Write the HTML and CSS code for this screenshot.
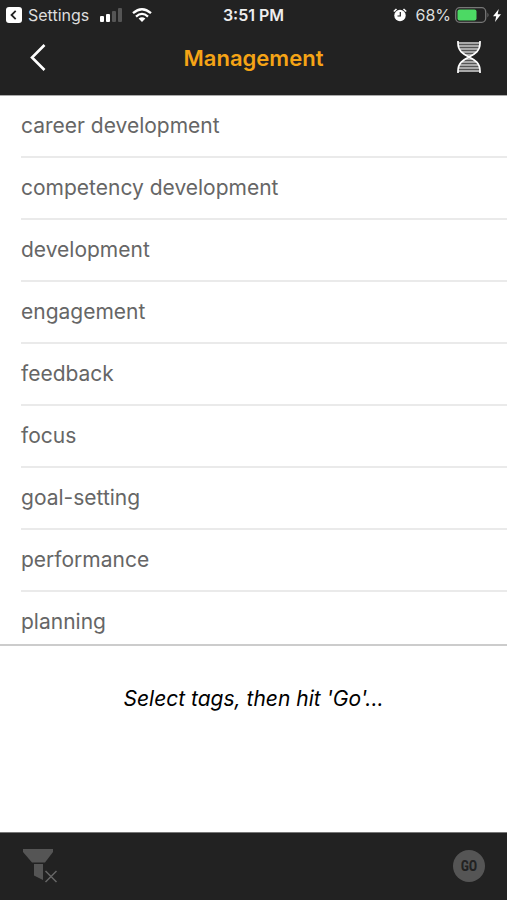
FILE: index.html
```html
<!DOCTYPE html>
<html lang="en">
<head>
<meta charset="utf-8">
<meta name="viewport" content="width=device-width, initial-scale=1">
<title>Management</title>
<link rel="stylesheet" href="styles.css">
</head>
<body>
<header class="top">
  <div class="status">
    <div class="status-left">
      <a class="return" href="#settings">
        <svg width="16" height="16" viewBox="0 0 16 16" aria-hidden="true"><rect width="16" height="16" rx="3" fill="#fff"/><path d="M9.700 3.800L5.500 8l4.200 4.200" fill="none" stroke="#222" stroke-width="1.800"/></svg>
        <span>Settings</span>
      </a>
      <svg class="signal" width="24" height="14" viewBox="0 0 24 14" aria-hidden="true"><rect x="1" y="8" width="4" height="6" rx="1" fill="#fff"/><rect x="7" y="6" width="4" height="8" rx="1" fill="#fff"/><rect x="13" y="3" width="4" height="11" rx="1" fill="#555"/><rect x="19" y="0" width="4" height="14" rx="1" fill="#555"/></svg>
      <svg class="wifi" width="20" height="14" viewBox="0 0 20 14" aria-hidden="true"><g fill="none" stroke="#fff" stroke-width="2.300"><path d="M1 5.200Q10-2.800 19 5.200"/><path d="M4 8.600Q10 3.200 16 8.600"/></g><path d="M6.600 10.600Q10 7.800 13.400 10.600L10 14z" fill="#fff"/></svg>
    </div>
    <time class="clock">3:51 PM</time>
    <div class="status-right">
      <svg width="14" height="14" viewBox="0 0 14 14" aria-hidden="true"><circle cx="7" cy="7.500" r="5.700" fill="#fff"/><path d="M.8 3.500L3.500 1M13.200 3.500L10.500 1" stroke="#fff" stroke-width="1.600"/><path d="M7.300 4v4H4.500" fill="none" stroke="#222" stroke-width="1.200"/></svg>
      <span class="percent">68%</span>
      <svg width="36" height="16" viewBox="0 0 36 16" aria-hidden="true"><rect x=".7" y=".7" width="30" height="14.600" rx="4" fill="none" stroke="#777" stroke-width="1.300"/><rect x="2.500" y="2.500" width="19" height="11" rx="2" fill="#4cd964"/><path d="M32.500 5.500q2 2.500 0 5z" fill="#777"/></svg>
      <svg class="bolt" width="8" height="13" viewBox="0 0 8 13" aria-hidden="true"><path d="M5.800 0L0 7.300h3.200L2 13l6-7.700H4.700z" fill="#fff"/></svg>
    </div>
  </div>
  <nav class="nav">
    <button class="icon-button" type="button" aria-label="Back">
      <svg width="16" height="28" viewBox="0 0 16 28"><path d="M14.500 1L2 13.500 14.500 26" fill="none" stroke="#fff" stroke-width="2.600"/></svg>
    </button>
    <h1>Management</h1>
    <button class="icon-button" type="button" aria-label="History">
      <svg width="26" height="34" viewBox="0 0 26 34"><path d="M2 1h22c0 7-4 11-11 15C6 12 2 8 2 1zM2 31h22c0-7-4-11-11-15C6 20 2 24 2 31z" fill="#555"/><path d="M2 2h22M3 5h20M4 8h18M6 11h14M9 14h8M9 18h8M6 21h14M4 24h18M3 27h20M2 30h22" stroke="#c4c4c4" stroke-width="1.400"/><path d="M2 0v2c0 8 5 11 11 14s11 6 11 14v2M24 0v2c0 8-5 11-11 14S2 22 2 30v2" fill="none" stroke="#fff" stroke-width="1.700"/></svg>
    </button>
  </nav>
</header>
<main class="tags">
  <ul>
    <li><button type="button">career development</button></li>
    <li><button type="button">competency development</button></li>
    <li><button type="button">development</button></li>
    <li><button type="button">engagement</button></li>
    <li><button type="button">feedback</button></li>
    <li><button type="button">focus</button></li>
    <li><button type="button">goal-setting</button></li>
    <li><button type="button">performance</button></li>
    <li><button type="button">planning</button></li>
  </ul>
</main>
<section class="selection"><p>Select tags, then hit 'Go'...</p></section>
<footer class="toolbar">
  <button class="icon-button" type="button" aria-label="Clear filter" disabled>
    <svg width="36" height="34" viewBox="0 0 36 34"><path d="M1 0h30v3l-8 10.500H10L1 3z" fill="#555"/><path d="M12 15h9v16l-9-4.500z" fill="#555"/><path d="M23.500 22l11 11M34.500 22l-11 11" stroke="#666" stroke-width="1.500"/></svg>
  </button>
  <button class="go" type="button" disabled>GO</button>
</footer>
</body>
</html>
```
FILE: styles.css
```css
* {
  box-sizing: border-box;
}

body {
  display: flex;
  flex-direction: column;
  height: 100vh;
  margin: 0;
  background: #fff;
  font-family: Inter, "Liberation Sans", sans-serif;
}

button {
  padding: 0;
  border: 0;
  background: none;
  font: inherit;
}

svg {
  display: block;
}

.top {
  flex: none;
  background: #222;
  color: #fff;
  border-bottom: 1px solid #aaa;
}

.status {
  display: grid;
  grid-template-columns: 1fr auto 1fr;
  align-items: center;
  height: 30px;
  padding: 0 6px;
  font-size: 16px;
}

.status-left,
.status-right,
.return {
  display: flex;
  align-items: center;
}

.return {
  gap: 6px;
  color: #ddd;
  text-decoration: none;
}

.signal {
  margin-left: 10px;
}

.wifi {
  margin-left: 9px;
}

.clock {
  font-weight: 600;
  color: #eee;
}

.status-right {
  justify-content: flex-end;
}

.percent {
  margin: 0 4px 0 8px;
  color: #ddd;
}

.bolt {
  margin-left: 2px;
}

.nav {
  display: flex;
  align-items: center;
  justify-content: space-between;
  height: 65px;
  padding: 0 22px 10px;
}

h1 {
  margin: 0;
  color: #f5a416;
  font-size: 22px;
  font-weight: 600;
  line-height: 28px;
}

.icon-button {
  display: grid;
  place-items: center;
  width: 32px;
  height: 40px;
}

.tags {
  flex: 1;
  min-height: 0;
  overflow: hidden;
}

.tags ul {
  margin: 0;
  padding: 0 0 0 21px;
  list-style: none;
}

.tags li {
  height: 62px;
  border-bottom: 2px solid #eaeaea;
}

.tags button {
  width: 100%;
  height: 100%;
  padding-bottom: 2px;
  color: #666;
  font-size: 21px;
  text-align: left;
}

.selection {
  flex: none;
  height: 188px;
  padding-top: 40px;
  border-top: 2px solid #ccc;
  text-align: center;
}

.selection p {
  margin: 0;
  font-size: 21px;
  font-style: italic;
  line-height: 26px;
}

.toolbar {
  display: flex;
  flex: none;
  align-items: center;
  justify-content: space-between;
  height: 68px;
  padding: 0 22px 2px;
  border-top: 1px solid #777;
  background: #222;
}

.go {
  width: 32px;
  height: 32px;
  border-radius: 50%;
  background: #555;
  color: #222;
  font-family: "Roboto Condensed", "Liberation Sans Narrow", Roboto, sans-serif;
  font-size: 14px;
  font-weight: 700;
}
```
